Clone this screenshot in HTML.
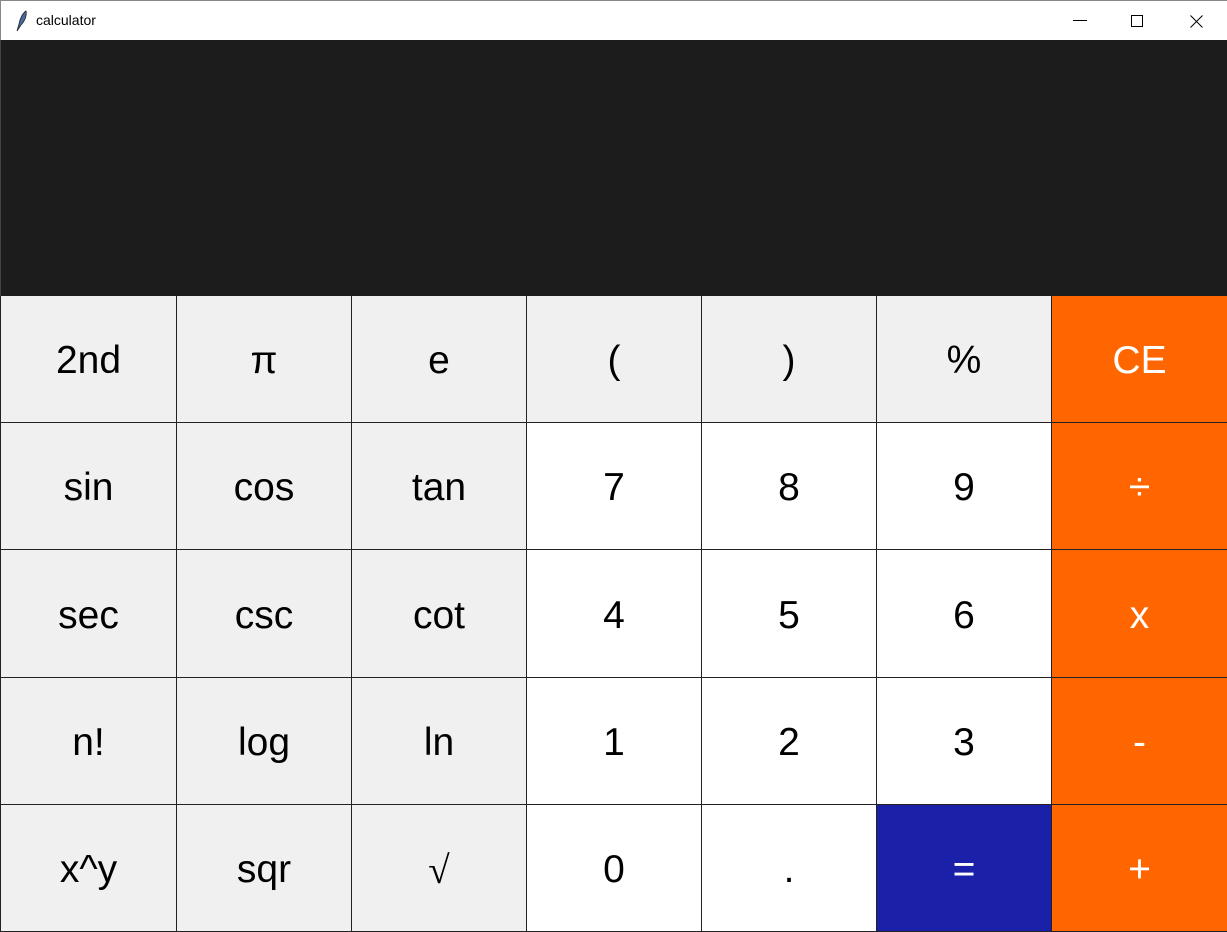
<!DOCTYPE html>
<html><head><meta charset="utf-8"><style>
html,body{margin:0;padding:0;width:1227px;height:932px;overflow:hidden;background:#fff;font-family:"Liberation Sans",Arial,sans-serif}
.tb{position:absolute;left:0;top:0;width:1227px;height:40px;background:#fff;border-top:1px solid #888;border-left:1px solid #888;box-sizing:border-box}
.tb .t{position:absolute;left:35px;top:11px;font-size:14px;color:#000}
.disp{position:absolute;left:0;top:40px;width:1227px;height:256px;background:#1c1c1c;border-left:1px solid #444;box-sizing:border-box}
.g{position:absolute;left:1px;top:296px;width:1226px;height:636px;display:grid;grid-template-columns:176px 175px 175px 175px 175px 175px 175px;grid-template-rows:127px 127px 128px 127px 127px;background:#222;}
.c{display:flex;align-items:center;justify-content:center;padding-top:4px;font-size:39px;color:#000;border-right:1px solid #222;border-bottom:1px solid #222;box-sizing:border-box;background:#f0f0f0}
.w{background:#fff}.o{background:#ff6600;color:#fff;border-right:none}.b{background:#1a21a8;color:#fff}
.s{font-family:"Liberation Serif",serif}
</style></head><body>
<div style="position:absolute;left:0;top:296px;width:1px;height:636px;background:#222"></div>
<div class="tb">
<svg style="position:absolute;left:13px;top:9px" width="14" height="22" viewBox="0 0 14 22"><path d="M3 21 L5 14 C6 8 9 3 12 1 C13 5 11 11 7 15 Z" fill="#4a6a9a" stroke="#223" stroke-width="0.8"/></svg>
<span class="t">calculator</span>
<svg style="position:absolute;left:1072px;top:19px" width="14" height="2"><rect width="14" height="1" fill="#000"/></svg>
<svg style="position:absolute;left:1130px;top:14px" width="12" height="12"><rect x="0.5" y="0.5" width="11" height="11" fill="none" stroke="#000"/></svg>
<svg style="position:absolute;left:1189px;top:14px" width="13" height="13"><path d="M0.5 0.5L12.5 12.5M12.5 0.5L0.5 12.5" stroke="#000"/></svg>
</div>
<div class="disp"></div>
<div class="g">
<div class="c">2nd</div><div class="c">π</div><div class="c">e</div><div class="c">(</div><div class="c">)</div><div class="c">%</div><div class="c o">CE</div>
<div class="c">sin</div><div class="c">cos</div><div class="c">tan</div><div class="c w">7</div><div class="c w">8</div><div class="c w">9</div><div class="c o">÷</div>
<div class="c">sec</div><div class="c">csc</div><div class="c">cot</div><div class="c w">4</div><div class="c w">5</div><div class="c w">6</div><div class="c o">x</div>
<div class="c">n!</div><div class="c">log</div><div class="c">ln</div><div class="c w">1</div><div class="c w">2</div><div class="c w">3</div><div class="c o">-</div>
<div class="c">x^y</div><div class="c">sqr</div><div class="c s">√</div><div class="c w">0</div><div class="c w">.</div><div class="c b">=</div><div class="c o">+</div>
</div>
</body></html>
